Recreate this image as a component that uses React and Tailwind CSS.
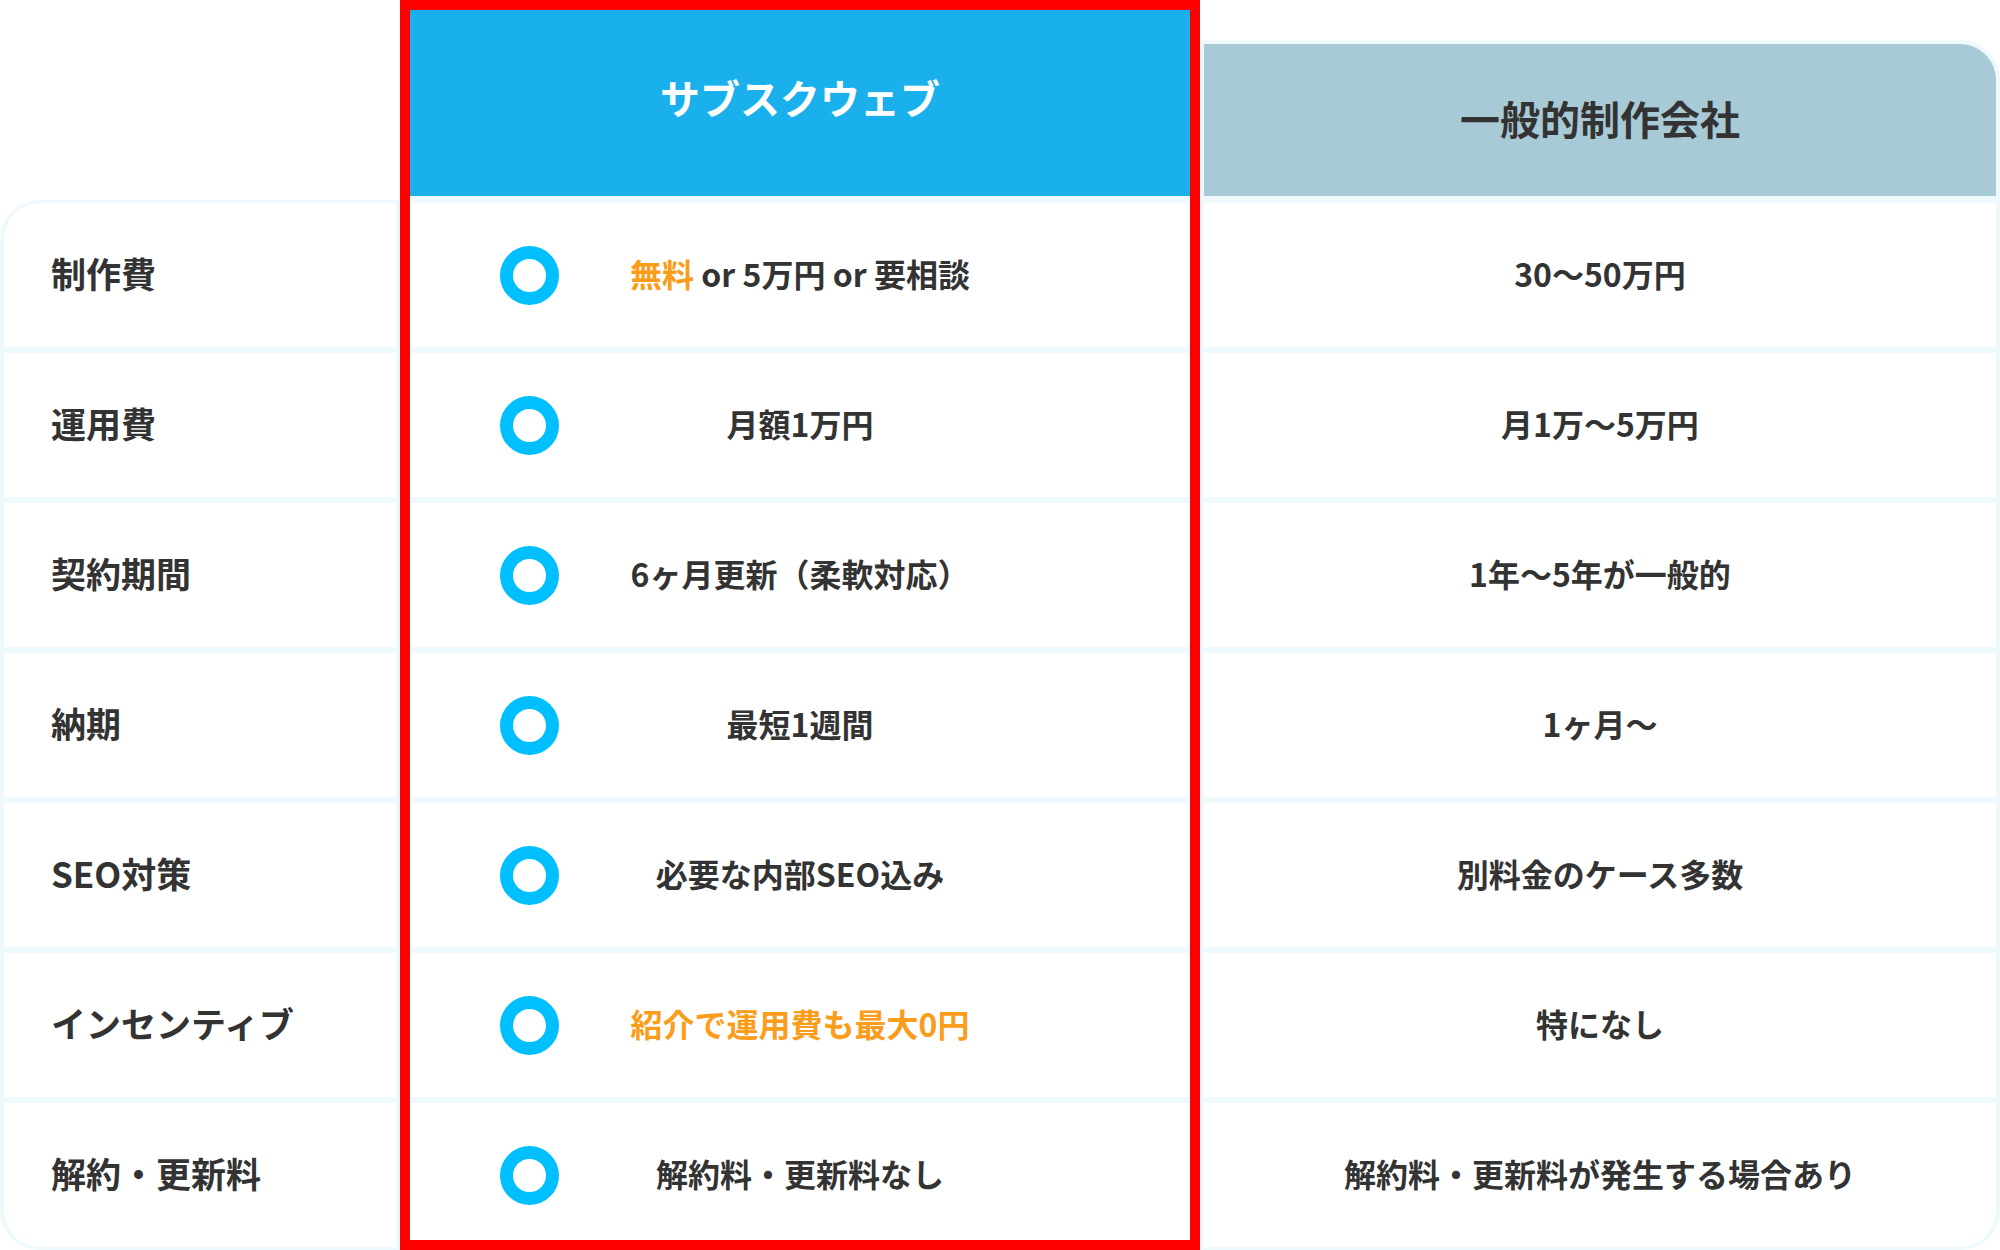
const rows = [
  {
    label: "制作費",
    ours: (
      <>
        <span className="text-[#fa9d1a]">無料</span> or 5万円 or 要相談
      </>
    ),
    theirs: "30〜50万円",
  },
  { label: "運用費", ours: "月額1万円", theirs: "月1万〜5万円" },
  { label: "契約期間", ours: "6ヶ月更新（柔軟対応）", theirs: "1年〜5年が一般的" },
  { label: "納期", ours: "最短1週間", theirs: "1ヶ月〜" },
  { label: "SEO対策", ours: "必要な内部SEO込み", theirs: "別料金のケース多数" },
  {
    label: "インセンティブ",
    ours: <span className="text-[#fa9d1a]">紹介で運用費も最大0円</span>,
    theirs: "特になし",
  },
  { label: "解約・更新料", ours: "解約料・更新料なし", theirs: "解約料・更新料が発生する場合あり" },
];

function Ring() {
  return <div className="w-[59px] h-[59px] rounded-full border-[13px] border-[#00bfff]" />;
}

export default function App() {
  const last = rows.length - 1;

  return (
    <div
      className="w-[2000px] h-[1250px] bg-white flex items-start overflow-hidden text-[#333333]"
      style={{ fontFamily: '"Noto Sans CJK JP", "Noto Sans", sans-serif' }}
    >
      {/* 項目 */}
      <div className="w-[400px] pt-[200px]">
        <div className="bg-[#eef9fe] rounded-l-[40px] py-[3px] px-[4px] flex flex-col gap-[6px]">
          {rows.map((r, i) => (
            <div
              key={r.label}
              className={
                "h-[144px] bg-white flex items-center pl-[47px] pb-[4px] text-[35px] font-bold " +
                (i === 0 ? "rounded-tl-[36px]" : "") +
                (i === last ? "rounded-bl-[36px]" : "")
              }
            >
              {r.label}
            </div>
          ))}
        </div>
      </div>

      {/* サブスクウェブ */}
      <div className="w-[800px] h-[1250px] border-[10px] border-[#ff0000] bg-[#eef9fe] overflow-hidden flex flex-col">
        <div className="h-[186px] shrink-0 bg-[#1ab0ec] flex items-center justify-center pb-[12px] text-white text-[40px] font-bold">
          サブスクウェブ
        </div>
        <div className="mt-[7px] flex flex-col gap-[6px]">
          {rows.map((r) => (
            <div
              key={r.label}
              className="h-[144px] shrink-0 bg-white grid grid-cols-[1fr_auto_1fr] items-center text-[32px] font-bold"
            >
              <div className="pl-[90px]">
                <Ring />
              </div>
              <div className="whitespace-nowrap pb-[4px]">{r.ours}</div>
              <div />
            </div>
          ))}
        </div>
      </div>

      {/* 一般的制作会社 */}
      <div className="w-[800px] pt-[40px]">
        <div className="bg-[#eef9fe] rounded-r-[40px] pt-[4px] px-[4px] pb-[3px]">
          <div className="h-[152px] bg-[#a8cad6] rounded-tr-[36px] flex items-center justify-center pb-[4px] text-[40px] font-bold">
            一般的制作会社
          </div>
          <div className="mt-[7px] flex flex-col gap-[6px]">
            {rows.map((r, i) => (
              <div
                key={r.label}
                className={
                  "h-[144px] bg-white flex items-center justify-center pb-[4px] text-[32px] font-bold " +
                  (i === last ? "rounded-br-[36px]" : "")
                }
              >
                {r.theirs}
              </div>
            ))}
          </div>
        </div>
      </div>
    </div>
  );
}
